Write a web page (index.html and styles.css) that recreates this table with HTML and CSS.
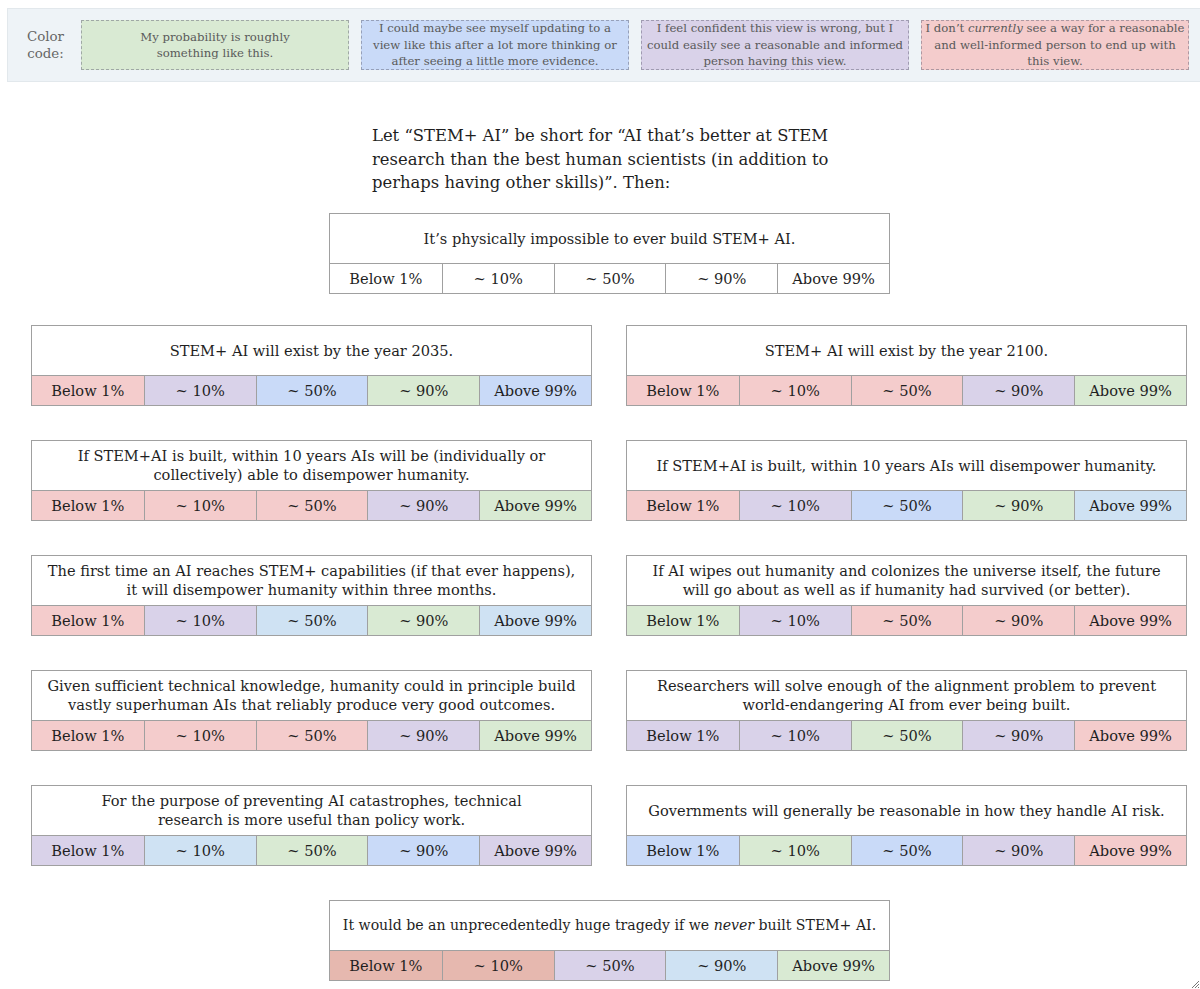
FILE: index.html
```html
<!DOCTYPE html>
<html>
<head>
<meta charset="utf-8">
<link rel="stylesheet" href="styles.css">
</head>
<body>
<div class="page">
  <div class="legend">
    <div class="legend-label">Color<br>code:</div>
    <div class="key green"><span>My probability is roughly<br>something like this.</span></div>
    <div class="key blue"><span>I could maybe see myself updating to a<br>view like this after a lot more thinking or<br>after seeing a little more evidence.</span></div>
    <div class="key purple"><span>I feel confident this view is wrong, but I<br>could easily see a reasonable and informed<br>person having this view.</span></div>
    <div class="key red"><span>I don’t <em>currently</em> see a way for a reasonable<br>and well-informed person to end up with<br>this view.</span></div>
  </div>

  <p class="intro">Let “STEM+ AI” be short for “AI that’s better at STEM research than the best human scientists (in addition to perhaps having other skills)”. Then:</p>

  <div class="q q-center q-top">
    <div class="q-head"><span>It’s physically impossible to ever build STEM+ AI.</span></div>
    <div class="q-cells">
      <div class="c">Below 1%</div><div class="c">~ 10%</div><div class="c">~ 50%</div><div class="c">~ 90%</div><div class="c">Above 99%</div>
    </div>
  </div>

  <div class="grid">
    <div class="q">
      <div class="q-head"><span>STEM+ AI will exist by the year 2035.</span></div>
      <div class="q-cells">
        <div class="c red">Below 1%</div><div class="c purple">~ 10%</div><div class="c blue">~ 50%</div><div class="c green">~ 90%</div><div class="c blue">Above 99%</div>
      </div>
    </div>
    <div class="q">
      <div class="q-head"><span>STEM+ AI will exist by the year 2100.</span></div>
      <div class="q-cells">
        <div class="c red">Below 1%</div><div class="c red">~ 10%</div><div class="c red">~ 50%</div><div class="c purple">~ 90%</div><div class="c green">Above 99%</div>
      </div>
    </div>

    <div class="q">
      <div class="q-head"><span>If STEM+AI is built, within 10 years AIs will be (individually or<br>collectively) able to disempower humanity.</span></div>
      <div class="q-cells">
        <div class="c red">Below 1%</div><div class="c red">~ 10%</div><div class="c red">~ 50%</div><div class="c purple">~ 90%</div><div class="c green">Above 99%</div>
      </div>
    </div>
    <div class="q">
      <div class="q-head"><span>If STEM+AI is built, within 10 years AIs will disempower humanity.</span></div>
      <div class="q-cells">
        <div class="c red">Below 1%</div><div class="c purple">~ 10%</div><div class="c blue">~ 50%</div><div class="c green">~ 90%</div><div class="c lblue">Above 99%</div>
      </div>
    </div>

    <div class="q">
      <div class="q-head"><span>The first time an AI reaches STEM+ capabilities (if that ever happens),<br>it will disempower humanity within three months.</span></div>
      <div class="q-cells">
        <div class="c red">Below 1%</div><div class="c purple">~ 10%</div><div class="c lblue">~ 50%</div><div class="c green">~ 90%</div><div class="c lblue">Above 99%</div>
      </div>
    </div>
    <div class="q">
      <div class="q-head"><span>If AI wipes out humanity and colonizes the universe itself, the future<br>will go about as well as if humanity had survived (or better).</span></div>
      <div class="q-cells">
        <div class="c green">Below 1%</div><div class="c purple">~ 10%</div><div class="c red">~ 50%</div><div class="c red">~ 90%</div><div class="c red">Above 99%</div>
      </div>
    </div>

    <div class="q">
      <div class="q-head"><span>Given sufficient technical knowledge, humanity could in principle build<br>vastly superhuman AIs that reliably produce very good outcomes.</span></div>
      <div class="q-cells">
        <div class="c red">Below 1%</div><div class="c red">~ 10%</div><div class="c red">~ 50%</div><div class="c purple">~ 90%</div><div class="c green">Above 99%</div>
      </div>
    </div>
    <div class="q">
      <div class="q-head"><span>Researchers will solve enough of the alignment problem to prevent<br>world-endangering AI from ever being built.</span></div>
      <div class="q-cells">
        <div class="c purple">Below 1%</div><div class="c purple">~ 10%</div><div class="c green">~ 50%</div><div class="c purple">~ 90%</div><div class="c red">Above 99%</div>
      </div>
    </div>

    <div class="q">
      <div class="q-head"><span>For the purpose of preventing AI catastrophes, technical<br>research is more useful than policy work.</span></div>
      <div class="q-cells">
        <div class="c purple">Below 1%</div><div class="c lblue">~ 10%</div><div class="c green">~ 50%</div><div class="c blue">~ 90%</div><div class="c purple">Above 99%</div>
      </div>
    </div>
    <div class="q">
      <div class="q-head"><span>Governments will generally be reasonable in how they handle AI risk.</span></div>
      <div class="q-cells">
        <div class="c blue">Below 1%</div><div class="c green">~ 10%</div><div class="c blue">~ 50%</div><div class="c purple">~ 90%</div><div class="c red">Above 99%</div>
      </div>
    </div>
  </div>

  <div class="q q-center q-bottom">
    <div class="q-head q-head-tight"><span>It would be an unprecedentedly huge tragedy if we <em>never</em> built STEM+ AI.</span></div>
    <div class="q-cells">
      <div class="c berry">Below 1%</div><div class="c berry">~ 10%</div><div class="c purple">~ 50%</div><div class="c lblue">~ 90%</div><div class="c green">Above 99%</div>
    </div>
  </div>

  <svg class="grip" width="10" height="10" viewBox="0 0 10 10">
    <path d="M9 2 L2 9 M9 5 L5 9 M9 8 L8 9" stroke="#777" stroke-width="1" fill="none"/>
  </svg>
</div>
</body>
</html>
```

FILE: styles.css
```css
html, body {
  margin: 0;
  padding: 0;
  background: #ffffff;
}
body {
  font-family: "DejaVu Serif", "Liberation Serif", serif;
  color: #1f1f1f;
  overflow: hidden;
}
.page {
  position: relative;
  width: 1200px;
  height: 989px;
  overflow: hidden;
}
.legend {
  margin: 8px 0 0 7px;
  width: 1205px;
  height: 74px;
  box-sizing: border-box;
  background: #eef3f7;
  border: 1px solid #e2e8ec;
  display: flex;
  align-items: center;
  gap: 12px;
}
.legend-label {
  width: 61px;
  box-sizing: border-box;
  padding-left: 14px;
  text-align: center;
  font-size: 13.4px;
  line-height: 17px;
  color: #666666;
}
.key {
  width: 268px;
  height: 50px;
  box-sizing: border-box;
  border: 1px dashed rgba(90, 90, 110, 0.45);
  display: flex;
  align-items: center;
  justify-content: center;
  text-align: center;
  font-size: 11.7px;
  line-height: 16.5px;
  color: #5a5a5a;
  white-space: nowrap;
}
.key.green { background: #d9ead3; }
.key.blue { background: #c9daf8; }
.key.purple { background: #d9d2e9; }
.key.red { background: #f4cccc; }

.intro {
  margin: 42px 0 0 372px;
  width: 470px;
  font-size: 16.4px;
  line-height: 23.5px;
  color: #1f1f1f;
}
.q {
  width: 561px;
  box-sizing: border-box;
  border: 1px solid #a0a0a0;
  background: #ffffff;
}
.q-center {
  margin-left: 329px;
}
.q-top {
  margin-top: 18px;
}
.q-bottom {
  margin-top: 34px;
}
.q-head {
  height: 49px;
  display: flex;
  align-items: center;
  justify-content: center;
  text-align: center;
  font-size: 14.6px;
  line-height: 19px;
  white-space: nowrap;
}
.q-head-tight {
  font-size: 14.1px;
}
.q-cells {
  display: grid;
  grid-template-columns: repeat(5, 1fr);
  border-top: 1px solid #a0a0a0;
  height: 30px;
  box-sizing: border-box;
}
.c {
  display: flex;
  align-items: center;
  justify-content: center;
  font-size: 14.6px;
  border-left: 1px solid #a0a0a0;
}
.c:first-child {
  border-left: none;
}
.c.red { background: #f4cccc; }
.c.purple { background: #d9d2e9; }
.c.blue { background: #c9daf8; }
.c.lblue { background: #cfe2f3; }
.c.green { background: #d9ead3; }
.c.berry { background: #e6b8af; }

.grid {
  margin: 31px 0 0 31px;
  display: grid;
  grid-template-columns: 561px 561px;
  column-gap: 34px;
  row-gap: 34px;
}
.grip {
  position: absolute;
  right: 0;
  bottom: 0;
}
```
